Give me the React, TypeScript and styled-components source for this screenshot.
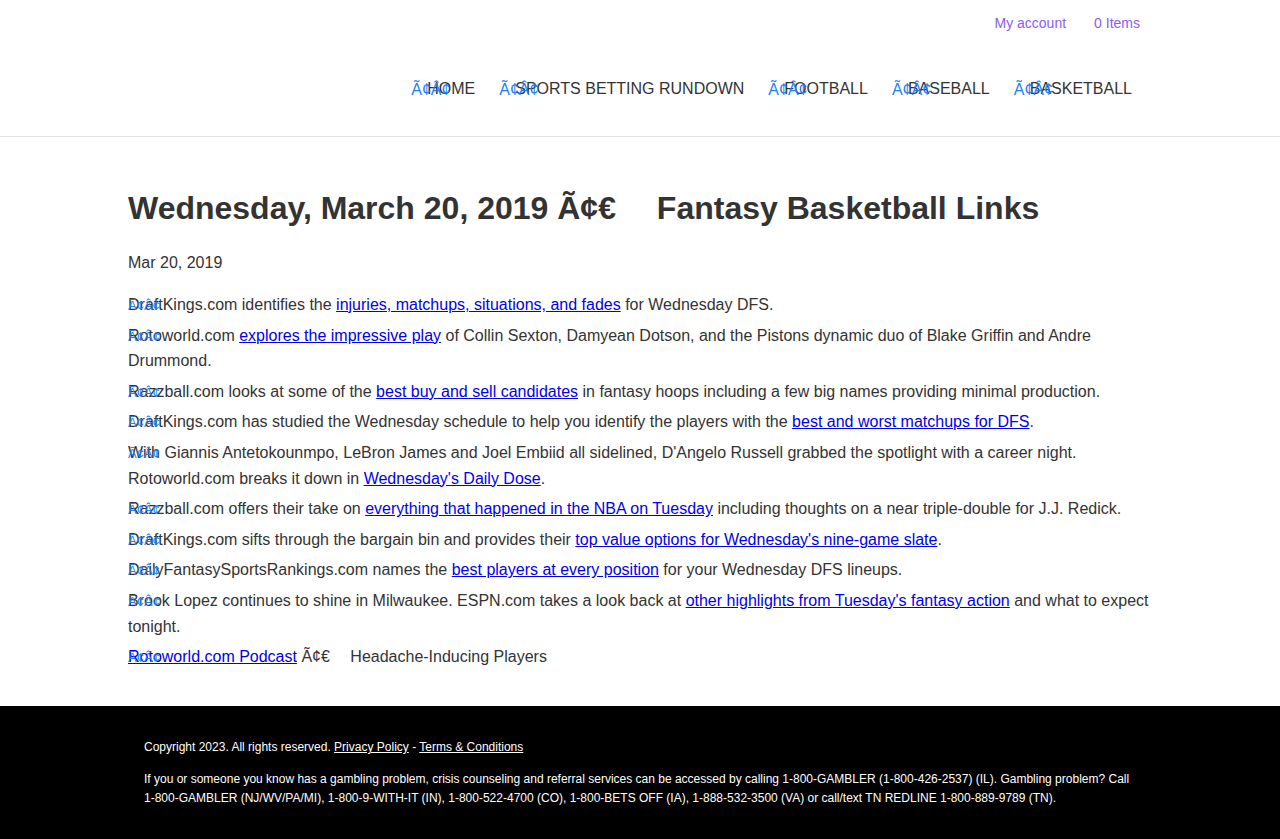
import React from "react";
import styled, { createGlobalStyle, css } from "styled-components";

const Global = createGlobalStyle`
  html, body { margin: 0; padding: 0; background: #fff; }
  body { font-family: "Liberation Sans", Arial, sans-serif; color: #333; }
  * { box-sizing: border-box; }
`;

const glitch = (size: number) => css`
  &::before {
    content: "Ã¢Â¢";
    position: absolute;
    left: 0;
    top: 1px;
    font-size: ${size}px;
    color: #1f7ff2;
    white-space: nowrap;
    pointer-events: none;
  }
`;

const Header = styled.header`
  border-bottom: 1px solid #e2e2e2;
`;

const Inner = styled.div`
  width: 1024px;
  margin: 0 auto;
`;

const TopBar = styled.div`
  height: 46px;
  display: flex;
  justify-content: flex-end;
  align-items: center;
  gap: 28px;
  padding-right: 12px;
`;

const TopLink = styled.a`
  font-size: 14px;
  line-height: 20px;
  color: #8a5cf6;
  text-decoration: none;
`;

const NavBar = styled.nav`
  height: 90px;
  display: flex;
  justify-content: flex-end;
  align-items: flex-start;
  padding-top: 31px;
  padding-right: 20px;
`;

const NavList = styled.ul`
  list-style: none;
  margin: 0;
  padding: 0;
  display: flex;
  gap: 24px;
`;

const NavItem = styled.li`
  position: relative;
  padding-left: 16px;
  font-size: 16px;
  line-height: 24px;
  color: #333;
  white-space: nowrap;
  ${glitch(16)}
`;

const Main = styled.main`
  width: 1024px;
  margin: 0 auto;
  padding: 51px 0 36px;
  display: flex;
  flex-direction: column;
`;

const Title = styled.h1`
  margin: 0;
  font-size: 32px;
  line-height: 40px;
  font-weight: bold;
  color: #333;
`;

const DateLine = styled.div`
  margin-top: 22px;
  font-size: 16px;
  line-height: 25.6px;
`;

const Items = styled.ul`
  list-style: none;
  margin: 16.4px 0 0;
  padding: 0;
  display: flex;
  flex-direction: column;
  gap: 5px;
`;

const Item = styled.li`
  position: relative;
  font-size: 16px;
  line-height: 25.6px;
  color: #333;
  ${glitch(13)}
`;

const Link = styled.a`
  color: #0000ee;
  text-decoration: underline;
`;

const Footer = styled.footer`
  background: #000;
  color: #fff;
  padding: 32.5px 0 33px;
`;

const FooterInner = styled.div`
  width: 992px;
  margin: 0 auto;
  font-size: 12px;
  line-height: 19px;
  display: flex;
  flex-direction: column;
  gap: 13px;
`;

const FooterP = styled.p`
  margin: 0;
`;

const FooterLink = styled.a`
  color: #fff;
  text-decoration: underline;
`;

const navItems = ["HOME", "SPORTS BETTING RUNDOWN", "FOOTBALL", "BASEBALL", "BASKETBALL"];

export default function App() {
  return (
    <>
      <Global />
      <Header>
        <Inner>
          <TopBar>
            <TopLink href="#">My account</TopLink>
            <TopLink href="#">0 Items</TopLink>
          </TopBar>
          <NavBar>
            <NavList>
              {navItems.map((n) => (
                <NavItem key={n}>{n}</NavItem>
              ))}
            </NavList>
          </NavBar>
        </Inner>
      </Header>
      <Main>
        <Title>Wednesday, March 20, 2019 Ã¢€{"\u2003 "}Fantasy Basketball Links</Title>
        <DateLine>Mar 20, 2019</DateLine>
        <Items>
          <Item>
            DraftKings.com identifies the <Link href="#">injuries, matchups, situations, and fades</Link> for Wednesday DFS.
          </Item>
          <Item>
            Rotoworld.com <Link href="#">explores the impressive play</Link> of Collin Sexton, Damyean Dotson, and the Pistons dynamic duo of Blake Griffin and Andre Drummond.
          </Item>
          <Item>
            Razzball.com looks at some of the <Link href="#">best buy and sell candidates</Link> in fantasy hoops including a few big names providing minimal production.
          </Item>
          <Item>
            DraftKings.com has studied the Wednesday schedule to help you identify the players with the <Link href="#">best and worst matchups for DFS</Link>.
          </Item>
          <Item>
            With Giannis Antetokounmpo, LeBron James and Joel Embiid all sidelined, D'Angelo Russell grabbed the spotlight with a career night. Rotoworld.com breaks it down in <Link href="#">Wednesday's Daily Dose</Link>.
          </Item>
          <Item>
            Razzball.com offers their take on <Link href="#">everything that happened in the NBA on Tuesday</Link> including thoughts on a near triple-double for J.J. Redick.
          </Item>
          <Item>
            DraftKings.com sifts through the bargain bin and provides their <Link href="#">top value options for Wednesday's nine-game slate</Link>.
          </Item>
          <Item>
            DailyFantasySportsRankings.com names the <Link href="#">best players at every position</Link> for your Wednesday DFS lineups.
          </Item>
          <Item>
            Brook Lopez continues to shine in Milwaukee. ESPN.com takes a look back at <Link href="#">other highlights from Tuesday's fantasy action</Link> and what to expect tonight.
          </Item>
          <Item>
            <Link href="#">Rotoworld.com Podcast</Link> Ã¢€{"\u2003 "}Headache-Inducing Players
          </Item>
        </Items>
      </Main>
      <Footer>
        <FooterInner>
          <FooterP>
            Copyright 2023. All rights reserved. <FooterLink href="#">Privacy Policy</FooterLink> - <FooterLink href="#">Terms &amp; Conditions</FooterLink>
          </FooterP>
          <FooterP>
            If you or someone you know has a gambling problem, crisis counseling and referral services can be accessed by calling 1-800-GAMBLER (1-800-426-2537) (IL). Gambling problem? Call 1-800-GAMBLER (NJ/WV/PA/MI), 1-800-9-WITH-IT (IN), 1-800-522-4700 (CO), 1-800-BETS OFF (IA), 1-888-532-3500 (VA) or call/text TN REDLINE 1-800-889-9789 (TN).
          </FooterP>
        </FooterInner>
      </Footer>
    </>
  );
}
